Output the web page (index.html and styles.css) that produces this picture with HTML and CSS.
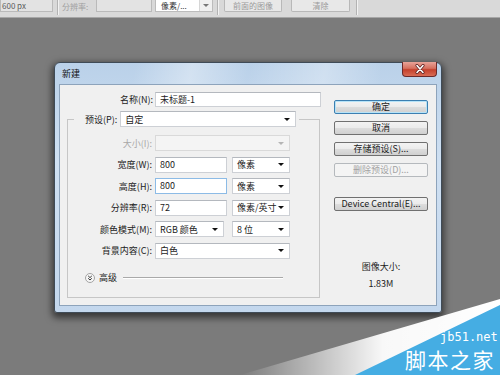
FILE: index.html
```html
<!DOCTYPE html>
<html lang="zh-CN">
<head>
    <meta charset="UTF-8">
    <meta name="viewport" content="width=device-width, initial-scale=1.0">
    <title>新建</title>
    <link rel="stylesheet" href="styles.css">
</head>
<body>

    <!-- Options bar of the crop tool -->
    <div class="toolbar">
        <div class="tb-field tb-size">600 px</div>
        <div class="tb-sep"></div>
        <span class="tb-label">分辨率:</span>
        <div class="tb-field tb-res"></div>
        <div class="tb-select">
            <span>像素/...</span>
            <span class="tb-drop"><i class="arrow"></i></span>
        </div>
        <div class="tb-sep"></div>
        <div class="tb-btn tb-front">前面的图像</div>
        <div class="tb-btn tb-clear">清除</div>
        <div class="tb-sep"></div>
    </div>

    <div class="stage">
        <div class="window">
            <div class="titlebar">
                <span class="title">新建</span>
                <div class="close">
                    <svg width="12" height="10" viewBox="0 0 12 10">
                        <path d="M3 1.5 L9 8.5 M9 1.5 L3 8.5" stroke="#5a1e1e" stroke-width="3" stroke-linecap="round"/>
                        <path d="M3 1.5 L9 8.5 M9 1.5 L3 8.5" stroke="#ffffff" stroke-width="1.6" stroke-linecap="round"/>
                    </svg>
                </div>
            </div>

            <div class="client">
                <div class="left">
                    <div class="name-row">
                        <span class="name-label">名称(N):</span>
                        <div class="field name-field">未标题-1</div>
                    </div>

                    <fieldset class="preset">
                        <legend>
                            <span class="legend-label">预设(P):</span>
                            <div class="select preset-select"><span>自定</span><i class="arrow"></i></div>
                        </legend>

                        <div class="row row-first">
                            <span class="lbl lbl-off">大小(I):</span>
                            <div class="select wide select-off"><span></span><i class="arrow"></i></div>
                        </div>
                        <div class="row">
                            <span class="lbl">宽度(W):</span>
                            <div class="field num">800</div>
                            <div class="select unit"><span>像素</span><i class="arrow"></i></div>
                        </div>
                        <div class="row">
                            <span class="lbl">高度(H):</span>
                            <div class="field num focused">800</div>
                            <div class="select unit"><span>像素</span><i class="arrow"></i></div>
                        </div>
                        <div class="row">
                            <span class="lbl">分辨率(R):</span>
                            <div class="field num">72</div>
                            <div class="select unit"><span>像素/英寸</span><i class="arrow"></i></div>
                        </div>
                        <div class="row">
                            <span class="lbl">颜色模式(M):</span>
                            <div class="select mode"><span>RGB 颜色</span><i class="arrow"></i></div>
                            <div class="select unit"><span>8 位</span><i class="arrow"></i></div>
                        </div>
                        <div class="row">
                            <span class="lbl">背景内容(C):</span>
                            <div class="select wide"><span>白色</span><i class="arrow"></i></div>
                        </div>

                        <div class="advanced">
                            <svg class="adv-icon" width="10" height="10" viewBox="0 0 10 10">
                                <circle cx="5" cy="5" r="4.5" fill="#f7f7f7" stroke="#a3a3a3"/>
                                <path d="M3.2 2.9 L5 4.6 L6.8 2.9 M3.2 5.3 L5 7 L6.8 5.3" fill="none" stroke="#333" stroke-width="1"/>
                            </svg>
                            <span>高级</span>
                            <div class="adv-line"></div>
                        </div>
                    </fieldset>
                </div>

                <div class="right">
                    <div class="btn btn-default">确定</div>
                    <div class="btn">取消</div>
                    <div class="btn">存储预设(S)...</div>
                    <div class="btn btn-off">删除预设(D)...</div>
                    <div class="btn btn-device">Device Central(E)...</div>
                    <div class="info">图像大小:</div>
                    <div class="info info-size">1.83M</div>
                </div>
            </div>
        </div>
    </div>

    <!-- Site watermark -->
    <div class="watermark">
        <svg width="300" height="80" viewBox="0 0 300 80">
            <defs>
                <linearGradient id="fade" x1="0" y1="0" x2="1" y2="0">
                    <stop offset="0" stop-color="#ffffff" stop-opacity="0"/>
                    <stop offset="0.55" stop-color="#ffffff" stop-opacity="0.95"/>
                    <stop offset="1" stop-color="#ffffff" stop-opacity="1"/>
                </linearGradient>
            </defs>
            <polygon points="40,80 300,4 300,80" fill="url(#fade)"/>
            <polygon points="155,80 300,10 300,80" fill="#45ade3"/>
        </svg>
        <span class="wm-url">jb51.net</span>
        <span class="wm-name">脚本之家</span>
    </div>

</body>
</html>
```

FILE: styles.css
```css
* {
    box-sizing: border-box;
}
body {
    margin: 0;
    width: 500px;
    height: 375px;
    overflow: hidden;
    position: relative;
    background: #7b7b7b;
    font-family: "Noto Sans CJK SC", "Noto Sans", sans-serif;
    font-size: 9px;
    color: #1c1c1c;
}

/* toolbar */
.toolbar {
    height: 18px;
    background: #d9d9d9;
    border-bottom: 1px solid #a6a6a6;
    display: flex;
    align-items: flex-start;
    font-size: 8px;
    line-height: 11px;
}
.tb-field {
    height: 12px;
    background: #e3e3e3;
    border: 1px solid #bababa;
    border-top: none;
    color: #5a5a5a;
}
.tb-size {
    width: 53px;
    padding-left: 1px;
}
.tb-res {
    width: 56px;
}
.tb-sep {
    width: 2px;
    height: 15px;
    border-left: 1px solid #b3b3b3;
    border-right: 1px solid #f2f2f2;
    margin: 0 3px 0 4px;
}
.tb-label {
    width: 34px;
    color: #a0a0a0;
    padding-top: 1px;
}
.tb-select {
    width: 58px;
    height: 12px;
    margin-left: 3px;
    background: #fff;
    border: 1px solid #bcbcbc;
    border-top: none;
    display: flex;
    justify-content: space-between;
    padding-left: 5px;
    color: #333;
}
.tb-drop {
    width: 13px;
    border-left: 1px solid #d6d6d6;
    background: #f0f0f0;
    display: flex;
    align-items: center;
    justify-content: center;
}
.tb-drop .arrow {
    border-top-color: #777;
}
.tb-btn {
    height: 12px;
    background: #e8e8e8;
    border: 1px solid #b8b8b8;
    border-top: none;
    border-radius: 0 0 2px 2px;
    color: #9a9a9a;
    text-align: center;
}
.tb-front {
    width: 58px;
    margin-left: 2px;
}
.tb-clear {
    width: 59px;
    margin-left: 9px;
}
.tb-clear + .tb-sep {
    margin-left: 6px;
}

/* dialog window */
.stage {
    padding: 44px 0 0 54px;
}
.window {
    width: 388px;
    height: 251px;
    border: 1px solid #3f4b57;
    border-radius: 6px 6px 3px 3px;
    background: linear-gradient(180deg, #bad1e9 0%, #cfe0f2 40%, #c3d7ed 100%);
    box-shadow: 0 3px 7px 2px rgba(0, 0, 0, 0.55);
    padding: 0 4px 6px;
    display: flex;
    flex-direction: column;
}
.titlebar {
    height: 21px;
    display: flex;
    justify-content: space-between;
    align-items: flex-start;
    background: linear-gradient(100deg, rgba(255, 255, 255, 0) 20%, rgba(255, 255, 255, 0.35) 35%, rgba(255, 255, 255, 0) 50%, rgba(255, 255, 255, 0.3) 70%, rgba(255, 255, 255, 0) 85%);
}
.title {
    align-self: center;
    padding-left: 3px;
    color: #111;
}
.close {
    width: 35px;
    height: 15px;
    margin-top: -1px;
    border: 1px solid #6b2a2a;
    border-top: none;
    border-radius: 0 0 4px 4px;
    background: linear-gradient(180deg, #e8a398 0%, #d6705f 45%, #c4412d 55%, #d86c55 100%);
    display: flex;
    align-items: center;
    justify-content: center;
}
.client {
    flex: 1;
    background: #f0f0f0;
    border: 1px solid #8da3bb;
    display: flex;
    padding: 7px 8px 0 7px;
}

/* left side */
.left {
    width: 255px;
}
.name-row {
    display: flex;
    align-items: center;
    height: 15px;
}
.name-label {
    width: 88px;
    padding-right: 2px;
    text-align: right;
}
.field {
    height: 16px;
    background: #fff;
    border: 1px solid #cdd0d5;
    border-top-color: #b4b8be;
    padding-left: 4px;
    line-height: 14px;
}
.name-field {
    width: 166px;
    height: 15px;
    line-height: 13px;
}
.focused {
    border-color: #8cbbe6;
}
.select {
    height: 16px;
    background: #fff;
    border: 1px solid #cdd0d5;
    border-top-color: #b4b8be;
    display: flex;
    justify-content: space-between;
    align-items: center;
    padding: 0 5px 0 4px;
    white-space: nowrap;
}
.arrow {
    display: block;
    width: 0;
    height: 0;
    border-left: 3px solid transparent;
    border-right: 3px solid transparent;
    border-top: 3px solid #111;
}
.select-off {
    background: #f4f4f4;
    border-color: #d9d9d9;
}
.select-off .arrow {
    border-top-color: #b5b5b5;
}

.preset {
    width: 253px;
    margin: 4px 0 0;
    padding: 0 0 12px;
    border: 1px solid #c6c6c6;
    min-inline-size: 0;
}
.preset legend {
    display: flex;
    align-items: center;
    height: 16px;
    margin-left: 6px;
    padding: 0 3px 0 11px;
}
.legend-label {
    margin-right: 3px;
}
.preset-select {
    width: 176px;
}
.row {
    display: flex;
    align-items: center;
    height: 16px;
    margin-top: 5.6px;
}
.row-first {
    margin-top: 8px;
}
.lbl {
    width: 87px;
    padding-right: 3px;
    text-align: right;
}
.lbl-off {
    color: #a8a8a8;
}
.num {
    width: 72px;
}
.unit {
    width: 58px;
    margin-left: 5px;
}
.mode {
    width: 69px;
    margin-right: 3px;
}
.wide {
    width: 135px;
}
.advanced {
    display: flex;
    align-items: center;
    height: 14px;
    margin: 12px 36px 0 17px;
}
.adv-icon {
    margin-right: 4px;
}
.adv-line {
    flex: 1;
    height: 2px;
    margin-left: 6px;
    border-top: 1px solid #a9a9a9;
    border-bottom: 1px solid #fff;
}

/* right side */
.right {
    width: 94px;
    margin-left: 12px;
    display: flex;
    flex-direction: column;
}
.btn {
    height: 14px;
    margin-top: 7px;
    border: 1px solid #707070;
    border-radius: 2px;
    background: linear-gradient(180deg, #f3f3f3 0%, #ebebeb 50%, #dddddd 51%, #d0d0d0 100%);
    text-align: center;
    line-height: 12px;
    white-space: nowrap;
}
.btn-default {
    margin-top: 8px;
    border-color: #3c7fb1;
    box-shadow: inset 0 0 0 1px #b7e3f7;
}
.btn-off {
    color: #a2a2a2;
    border-color: #b5b9bd;
    background: #f4f4f4;
}
.btn-device {
    margin-top: 20px;
}
.info {
    margin-top: 50px;
    line-height: 12px;
    text-align: center;
}
.info-size {
    margin-top: 5px;
}

/* watermark */
.watermark {
    position: absolute;
    right: 0;
    bottom: 0;
    width: 300px;
    height: 80px;
}
.watermark svg {
    display: block;
}
.wm-url {
    position: absolute;
    left: 240px;
    top: 36px;
    font-family: "DejaVu Sans Mono", monospace;
    font-size: 12px;
    line-height: 12px;
    color: #fff;
}
.wm-name {
    position: absolute;
    left: 205px;
    top: 54px;
    font-size: 21px;
    line-height: 21px;
    letter-spacing: 1.5px;
    white-space: nowrap;
    color: #fff;
}
```
